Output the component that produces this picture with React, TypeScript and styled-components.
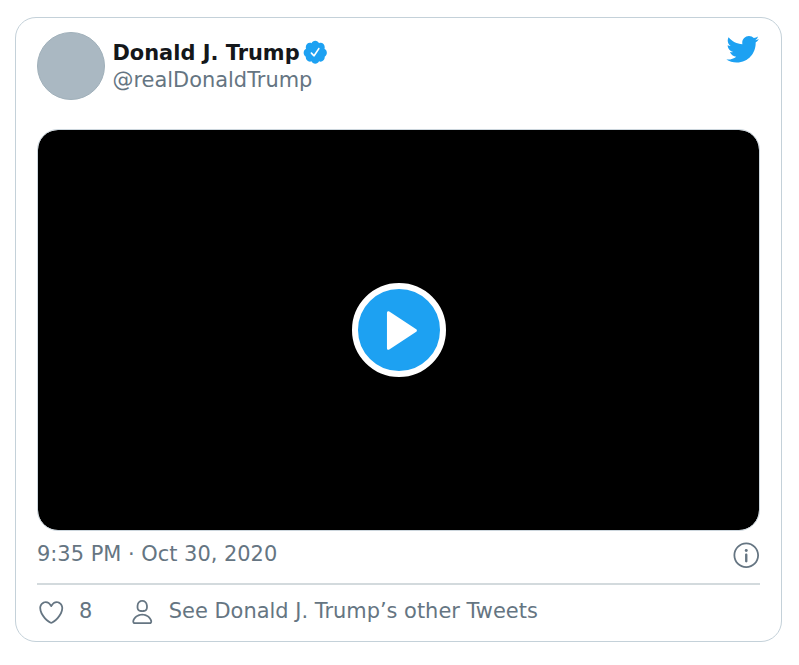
import React from "react";
import styled, { createGlobalStyle } from "styled-components";

const GlobalStyle = createGlobalStyle`
  *, *::before, *::after { box-sizing: border-box; }
  body {
    margin: 0;
    background: #fff;
    font-family: "DejaVu Sans", sans-serif;
    font-size: 20.93px;
    line-height: 27px;
    color: #657582;
  }
`;

const Page = styled.main`
  display: flex;
  padding: 17px 17px 23px 15px;
  height: 665px;
`;

const Card = styled.article`
  display: flex;
  flex-direction: column;
  width: 767px;
  height: 625px;
  padding: 14px 21px 0;
  border: 1px solid #c4d1d9;
  border-radius: 21px;
`;

const Header = styled.header`
  display: flex;
  align-items: flex-start;
  height: 97px;
`;

const Avatar = styled.div`
  width: 68.4px;
  height: 68.4px;
  border-radius: 50%;
  background: #aab8c2;
  border: 1px solid #a0b0ba;
`;

const Author = styled.div`
  display: flex;
  flex-direction: column;
  flex: 1;
  padding: 8px 0 0 7.1px;
`;

const NameRow = styled.div`
  display: flex;
  align-items: center;
  height: 27px;
`;

const Name = styled.span`
  font-weight: 700;
  color: #14171a;
  white-space: nowrap;
`;

const Handle = styled.span`
  height: 27px;
`;

const Icon = styled.svg<{ $size: number; $color?: string }>`
  display: block;
  flex: none;
  width: ${(p) => p.$size}px;
  height: ${(p) => p.$size}px;
  fill: ${(p) => p.$color ?? "#657582"};
`;

const BadgeIcon = styled(Icon)`
  margin: -3px 0 0 2.5px;
`;

const BirdIcon = styled(Icon)`
  margin-right: 1px;
`;

const Video = styled.div`
  display: flex;
  align-items: center;
  justify-content: center;
  height: 402px;
  border: 1px solid #ccd6dd;
  border-radius: 21px;
  background: #000;
  background-clip: padding-box;
`;

const PlayButton = styled.button`
  display: flex;
  align-items: center;
  justify-content: center;
  width: 94px;
  height: 94px;
  padding: 0 0 0 2px;
  border: 6px solid #fff;
  border-radius: 50%;
  background: #1da1f2;
`;

const Meta = styled.div`
  display: flex;
  justify-content: space-between;
  height: 54px;
  padding-top: 10px;
  border-bottom: 2px solid #d3dadd;
`;

const Actions = styled.footer`
  display: flex;
  align-items: center;
  height: 54px;
`;

const Action = styled.span<{ $gap: number }>`
  display: flex;
  align-items: center;
  gap: ${(p) => p.$gap}px;
  margin-right: 35.5px;
  white-space: nowrap;
`;

const ActionText = styled.span`
  margin-top: -1px;
`;

export default function App() {
  return (
    <>
      <GlobalStyle />
      <Page>
        <Card>
          <Header>
            <Avatar />
            <Author>
              <NameRow>
                <Name>Donald J. Trump</Name>
                <BadgeIcon $size={26.5} $color="#1da1f2" viewBox="0 0 24 24">
                  <path d="M22.5 12.5c0-1.58-.875-2.95-2.148-3.6.154-.435.238-.905.238-1.4 0-2.21-1.71-3.998-3.818-3.998-.47 0-.92.084-1.336.25C14.818 2.415 13.51 1.5 12 1.5s-2.816.917-3.437 2.25c-.415-.165-.866-.25-1.336-.25-2.11 0-3.818 1.79-3.818 4 0 .494.083.964.237 1.4-1.272.65-2.147 2.018-2.147 3.6 0 1.495.782 2.798 1.942 3.486-.02.17-.032.34-.032.514 0 2.21 1.708 4 3.818 4 .47 0 .92-.086 1.335-.25.62 1.334 1.926 2.25 3.437 2.25 1.512 0 2.818-.916 3.437-2.25.415.163.865.248 1.336.248 2.11 0 3.818-1.79 3.818-4 0-.174-.012-.344-.033-.513 1.158-.687 1.943-1.99 1.943-3.484zm-6.616-3.334l-4.334 6.5c-.145.217-.382.334-.625.334-.143 0-.288-.04-.416-.126l-.115-.094-2.415-2.415c-.293-.293-.293-.768 0-1.06s.768-.294 1.06 0l1.77 1.767 3.825-5.74c.23-.345.696-.436 1.04-.207.346.23.44.696.21 1.04z" />
                </BadgeIcon>
              </NameRow>
              <Handle>@realDonaldTrump</Handle>
            </Author>
            <BirdIcon $size={34.5} $color="#1da1f2" viewBox="0 0 24 24">
              <path d="M23.643 4.937c-.835.37-1.732.62-2.675.733.962-.576 1.7-1.49 2.048-2.578-.9.534-1.897.922-2.958 1.13-.85-.904-2.06-1.47-3.4-1.47-2.572 0-4.658 2.086-4.658 4.66 0 .364.042.718.12 1.06-3.873-.195-7.304-2.05-9.602-4.868-.4.69-.63 1.49-.63 2.342 0 1.616.823 3.043 2.072 3.878-.764-.025-1.482-.234-2.11-.583v.06c0 2.257 1.605 4.14 3.737 4.568-.392.106-.803.162-1.227.162-.3 0-.593-.028-.877-.082.593 1.85 2.313 3.198 4.352 3.234-1.595 1.25-3.604 1.995-5.786 1.995-.376 0-.747-.022-1.112-.065 2.062 1.323 4.51 2.093 7.14 2.093 8.57 0 13.255-7.098 13.255-13.254 0-.2-.005-.402-.014-.602.91-.658 1.7-1.477 2.323-2.41z" />
            </BirdIcon>
          </Header>
          <Video>
            <PlayButton aria-label="Play video">
              <Icon $size={43} $color="#fff" viewBox="0 0 24 24">
                <path d="M21.35 11.3 6.3 1.4C5.7 1 5 1.3 5 2.1v19.8c0 .8.7 1.1 1.3.7l15.05-9.9c.5-.35.5-1.05 0-1.4z" />
              </Icon>
            </PlayButton>
          </Video>
          <Meta>
            <span>9:35 PM · Oct 30, 2020</span>
            <Icon $size={28.5} viewBox="0 0 24 24">
              <path d="M12 18.042c-.553 0-1-.447-1-1v-5.5c0-.553.447-1 1-1s1 .447 1 1v5.5c0 .553-.447 1-1 1z" />
              <circle cx="12" cy="8.042" r="1.25" />
              <path d="M12 22.75C6.072 22.75 1.25 17.928 1.25 12S6.072 1.25 12 1.25 22.75 6.072 22.75 12 17.928 22.75 12 22.75zm0-20C6.9 2.75 2.75 6.9 2.75 12S6.9 21.25 12 21.25s9.25-4.15 9.25-9.25S17.1 2.75 12 2.75z" />
            </Icon>
          </Meta>
          <Actions>
            <Action $gap={13.5}>
              <Icon $size={28.5} viewBox="0 0 24 24">
                <path d="M12 21.638h-.014C9.403 21.59 1.95 14.856 1.95 8.478c0-3.064 2.525-5.754 5.403-5.754 2.29 0 3.83 1.58 4.646 2.73.814-1.148 2.354-2.73 4.645-2.73 2.88 0 5.404 2.69 5.404 5.755 0 6.376-7.454 13.11-10.037 13.157H12zM7.354 4.225c-2.08 0-3.903 1.988-3.903 4.255 0 5.74 7.034 11.596 8.55 11.658 1.518-.062 8.55-5.917 8.55-11.658 0-2.267-1.823-4.255-3.903-4.255-2.528 0-3.94 2.936-3.952 2.965-.23.562-1.156.562-1.387 0-.014-.03-1.425-2.965-3.954-2.965z" />
              </Icon>
              <ActionText>8</ActionText>
            </Action>
            <Action $gap={12.5}>
              <Icon $size={28.5} viewBox="0 0 24 24">
                <path d="M12 11.816c1.355 0 2.872-.15 3.84-1.256.814-.93 1.078-2.368.806-4.392-.38-2.825-2.117-4.512-4.646-4.512S7.734 3.343 7.354 6.17c-.272 2.022-.008 3.46.806 4.39.968 1.107 2.485 1.256 3.84 1.256zM8.84 6.368c.162-1.2.787-3.212 3.16-3.212s2.998 2.013 3.16 3.212c.207 1.55.057 2.627-.45 3.205-.455.52-1.266.743-2.71.743s-2.255-.223-2.71-.743c-.507-.578-.657-1.656-.45-3.205zm11.44 12.868c-.877-3.526-4.282-5.99-8.28-5.99s-7.403 2.464-8.28 5.99c-.172.692-.028 1.4.395 1.94.408.52 1.04.82 1.733.82h12.304c.693 0 1.325-.3 1.733-.82.424-.54.567-1.247.394-1.94zm-1.576 1.016c-.126.16-.316.246-.552.246H5.848c-.235 0-.426-.085-.552-.246-.137-.174-.18-.412-.12-.654.71-2.855 3.517-4.85 6.824-4.85s6.114 1.994 6.824 4.85c.06.242.017.48-.12.654z" />
              </Icon>
              <ActionText>See Donald J. Trump’s other Tweets</ActionText>
            </Action>
          </Actions>
        </Card>
      </Page>
    </>
  );
}
